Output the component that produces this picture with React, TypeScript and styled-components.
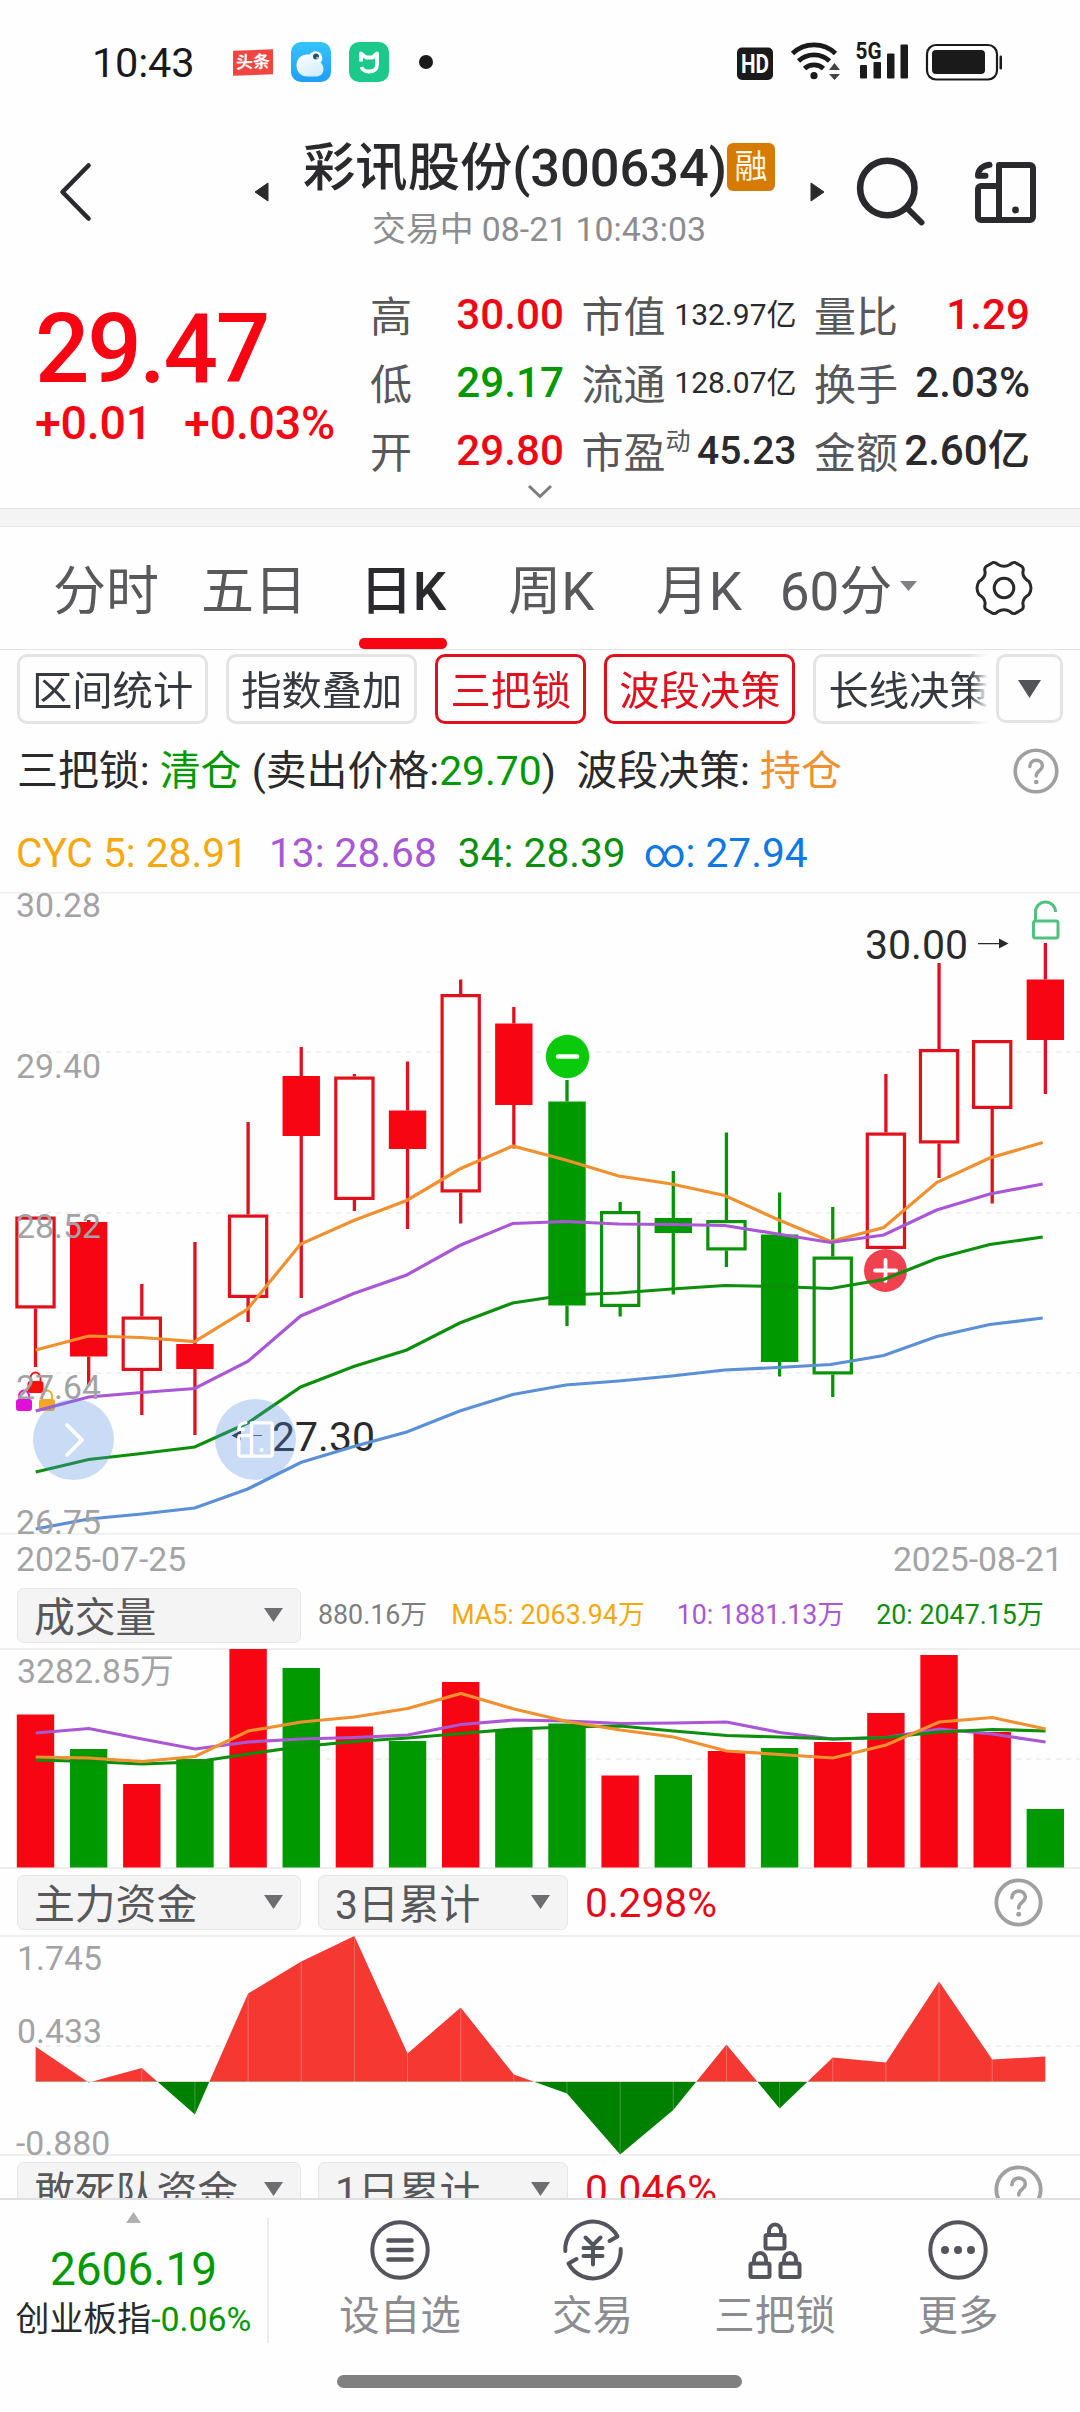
import React from "react";
import styled, { createGlobalStyle, css } from "styled-components";

const RED = "#f70512";
const WICK_RED = "#e0101c";
const GREEN = "#009900";
const INK = "#2a2a2c";
const SANS = `Roboto, "Noto Sans CJK SC", sans-serif`;

const GlobalStyle = createGlobalStyle`
  * { box-sizing: border-box; }
  body { margin: 0; background: #fff; }
  svg { display: block; flex: none; overflow: visible; }
  button { font: inherit; background: none; border: 0; padding: 0; color: inherit; }
`;

const Screen = styled.main`
  width: 1080px;
  height: 2412px;
  overflow: hidden;
  display: flex;
  flex-direction: column;
  background: #fefefe;
  color: ${INK};
  font-family: ${SANS};
  white-space: nowrap;
`;

/* ---------- status bar ---------- */

const StatusBar = styled.header`
  height: 124px;
  flex: none;
  display: flex;
  align-items: center;
  padding: 0 77px 0 92px;
`;
const Clock = styled.time`
  width: 141px;
  font-size: 41.5px;
  line-height: 48px;
  letter-spacing: -0.2px;
  padding-top: 2px;
  color: #1a1a1a;
`;
const AppBadges = styled.div`
  display: flex;
  align-items: center;
  gap: 18px;
`;
const Toutiao = styled.span`
  width: 40px;
  height: 25px;
  background: #f04540;
  color: #fff;
  font-size: 17px;
  font-weight: 700;
  line-height: 25px;
  text-align: center;
  transform: skewY(-2deg);
`;
const Dot = styled.span`
  width: 14px;
  height: 14px;
  border-radius: 50%;
  background: #1a1a1a;
  margin-left: 12px;
`;
const Signals = styled.div`
  margin-left: auto;
`;

/* ---------- title bar ---------- */

const TitleBar = styled.div`
  height: 136px;
  flex: none;
  display: flex;
  align-items: center;
  padding: 0 44px 0 58px;
`;
const TitleGroup = styled.div`
  display: flex;
  align-items: center;
  width: 571px;
  margin: 0 30px 0 160px;
  justify-content: space-between;
`;
const TitleBlock = styled.div`
  width: 474px;
  display: flex;
  flex-direction: column;
  align-items: center;
  gap: 12px;
  margin-right: 1px;
  padding-top: 4px;
`;
const StockName = styled.h1`
  margin: 0;
  display: flex;
  align-items: center;
  font-size: 52.3px;
  line-height: 60px;
  font-weight: 500;
`;
const MarginTag = styled.span`
  width: 48px;
  height: 48px;
  border-radius: 6px;
  background: #d67a00;
  color: #fff8e8;
  font-size: 33px;
  font-weight: 400;
  line-height: 48px;
  text-align: center;
  margin-bottom: 2px;
`;
const SubTitle = styled.p`
  margin: 0;
  font-size: 33.8px;
  line-height: 40px;
  color: #8d8d8f;
`;
const IconButton = styled.button<{ $ml?: number }>`
  display: flex;
  margin-left: ${(p) => p.$ml ?? 0}px;
`;

/* ---------- quote ---------- */

const Quote = styled.section`
  height: 248px;
  flex: none;
  display: flex;
  flex-direction: column;
  align-items: center;
`;
const QuoteBody = styled.div`
  width: 100%;
  height: 224px;
  display: flex;
`;
const PriceBlock = styled.div`
  width: 370px;
  padding: 38px 0 0 35px;
  color: ${RED};
  font-weight: 500;
`;
const Price = styled.div`
  font-size: 96px;
  line-height: 102px;
  letter-spacing: -2.4px;
`;
const Change = styled.div`
  display: flex;
  font-size: 46.5px;
  line-height: 46px;
  letter-spacing: -0.2px;
  gap: 32px;
`;
const StatGrid = styled.dl`
  margin: 0;
  padding-top: 20px;
  display: grid;
  grid-template-columns: 194px 215px 216px;
  grid-auto-rows: 68px;
  column-gap: 17.5px;
`;
const Stat = styled.div`
  display: flex;
  align-items: center;
  justify-content: space-between;
`;
const StatLabel = styled.dt`
  font-size: 42px;
  color: #58585a;
  display: flex;
  line-height: 68px;
  padding-top: 7px;
`;
const StatSup = styled.sup`
  font-size: 25px;
  line-height: 44px;
`;
const StatValue = styled.dd<{ $color?: string; $small?: boolean; $size?: number }>`
  margin: 0;
  font-size: ${(p) => p.$size ?? (p.$small ? 30 : 42.2)}px;
  line-height: 68px;
  padding-top: 1px;
  font-weight: ${(p) => (p.$small ? 400 : 500)};
  color: ${(p) => p.$color ?? INK};
`;
const Divider = styled.div`
  height: 19px;
  flex: none;
  background: #f4f4f4;
  border: solid #e3e3e3;
  border-width: 1px 0;
`;

/* ---------- period tabs ---------- */

const Tabs = styled.nav`
  height: 123px;
  flex: none;
  display: flex;
  padding: 19px 0 0 32px;
  border-bottom: 1px solid #e2e2e2;
`;
const Tab = styled.button<{ $w: number; $active?: boolean }>`
  width: ${(p) => p.$w}px;
  display: flex;
  flex-direction: column;
  align-items: center;
  font-size: 53px;
  line-height: 92px;
  color: #59595b;
  ${(p) =>
    p.$active &&
    css`
      color: ${INK};
      font-weight: 500;
      &::after {
        content: "";
        width: 88px;
        height: 11px;
        border-radius: 5px;
        background: ${RED};
      }
    `}
`;
const TabIcon = styled.span<{ $ml: number; $h?: number }>`
  display: flex;
  align-items: center;
  height: ${(p) => p.$h ?? 79}px;
  margin-left: ${(p) => p.$ml}px;
`;

/* ---------- indicator chips ---------- */

const ChipBar = styled.div`
  height: 78px;
  flex: none;
  display: flex;
  padding: 4px 17px 0;
  justify-content: space-between;
`;
const ChipScroller = styled.div`
  width: 971px;
  height: 70px;
  display: flex;
  gap: 18px;
  overflow: hidden;
  mask-image: linear-gradient(90deg, #000 953px, transparent 971px);
`;
const Chip = styled.button<{ $on?: boolean }>`
  flex: none;
  height: 70px;
  padding: 6px 12px 0;
  border: 3px solid ${(p) => (p.$on ? "#e0101c" : "#e4e4e5")};
  border-radius: 10px;
  font-size: 40.3px;
  line-height: 58px;
  color: ${(p) => (p.$on ? "#e0101c" : "#363a40")};
`;
const ChipMore = styled.button`
  width: 67px;
  height: 69px;
  border: 3px solid #e4e4e5;
  border-radius: 10px;
  display: flex;
  align-items: center;
  justify-content: center;
`;

/* ---------- signal lines ---------- */

const SignalLine = styled.div`
  height: 86px;
  flex: none;
  display: flex;
  align-items: center;
  justify-content: space-between;
  padding: 0 21px 0 17px;
  font-size: 40.9px;
  line-height: 86px;
  white-space: pre;
`;
const Tint = styled.span<{ $c: string }>`
  color: ${(p) => p.$c};
`;
const CycLine = styled.div`
  height: 78px;
  flex: none;
  display: flex;
  align-items: center;
  gap: 21px;
  padding-left: 16px;
  font-size: 40.7px;
`;
const CycInfinity = styled.span`
  color: #0d78e6;
  margin-left: -3px;
`;

/* ---------- charts ---------- */

const ChartArea = styled.section`
  position: relative;
  flex: none;
`;
const FloatButton = styled.button<{ $left: number }>`
  position: absolute;
  left: ${(p) => p.$left}px;
  top: 507px;
  width: 81px;
  height: 81px;
  border-radius: 50%;
  background: rgba(82, 138, 225, 0.3);
  display: flex;
  align-items: center;
  justify-content: center;
`;
const DateRow = styled.div`
  height: 47px;
  flex: none;
  display: flex;
  align-items: center;
  justify-content: space-between;
  padding: 1px 17px 0 16px;
  font-size: 33.7px;
  color: #a3a3a5;
`;
const PanelBar = styled.div`
  height: 66px;
  flex: none;
  display: flex;
  align-items: center;
  padding-left: 17px;
`;
const Select = styled.button<{ $w: number }>`
  width: ${(p) => p.$w}px;
  height: 55px;
  border: 1px solid #e6e6e6;
  border-radius: 7px;
  background: #f4f4f4;
  display: flex;
  align-items: center;
  justify-content: space-between;
  padding: 0 17px 0 16px;
  margin-right: 17px;
  font-size: 40.8px;
  color: #58585a;
`;
const SelectText = styled.span`
  line-height: 47px;
  padding-top: 6px;
`;
const VolumeLegend = styled.div`
  display: flex;
  gap: 32px;
  font-size: 26.8px;
  line-height: 66px;
`;
const VolumeNow = styled.span`
  color: #7e7e80;
  margin-right: -8px;
`;
const Ratio = styled.span`
  font-size: 40.7px;
  line-height: 66px;
  padding-top: 1px;
  color: #e60a18;
`;
const HelpSlot = styled.span`
  margin: 0 37px 0 auto;
`;
const ClippedPanel = styled.div`
  height: 42px;
  flex: none;
  overflow: hidden;
`;

/* ---------- bottom bar ---------- */

const BottomBar = styled.footer`
  height: 147px;
  flex: none;
  border-top: 2px solid #e0e0e0;
  display: flex;
`;
const IndexTicker = styled.div`
  width: 269px;
  margin-top: 18px;
  height: 125px;
  border-right: 2px solid #ececec;
  display: flex;
  flex-direction: column;
  align-items: center;
`;
const TickerCaret = styled.div`
  height: 21px;
  margin-top: -6px;
`;
const IndexPrice = styled.div`
  font-size: 46px;
  line-height: 60px;
  margin-top: 6px;
  color: ${GREEN};
`;
const IndexName = styled.div`
  font-size: 33.9px;
  line-height: 40px;
  margin-top: 1px;
`;
const Action = styled.button<{ $w: number }>`
  width: ${(p) => p.$w}px;
  display: flex;
  flex-direction: column;
  align-items: center;
  padding-top: 20px;
  font-size: 40.5px;
  line-height: 50px;
  color: #8c8c90;
  gap: 11px;
`;
const HomeArea = styled.div`
  flex: 1;
  display: flex;
  justify-content: center;
  padding: 30px 1px 0 0;
`;
const HomePill = styled.div`
  width: 405px;
  height: 13px;
  border-radius: 7px;
  background: #808080;
`;

/* ---------- icons ---------- */

const WeatherIcon = () => (
  <svg width="40" height="40" viewBox="0 0 40 40">
    <defs>
      <linearGradient id="sky" x1="0" y1="0" x2="0" y2="1">
        <stop offset="0" stopColor="#35c4fb" />
        <stop offset="1" stopColor="#1f9df5" />
      </linearGradient>
      <linearGradient id="cloud" x1="0" y1="0" x2="0.6" y2="1">
        <stop offset="0" stopColor="#fff" />
        <stop offset="1" stopColor="#d4edfd" />
      </linearGradient>
    </defs>
    <rect width="40" height="40" rx="10" fill="url(#sky)" />
    <circle cx="24.500" cy="16" r="6.800" fill="#fff" />
    <path d="M16.500 12.500c4.500 0 7 2.500 8 5.500c5 1 8 4.500 8 9c0 5-3.500 7.500-8 7.500h-8c-6.500 0-11-4.500-11-11s4.500-11 11-11z" fill="url(#cloud)" />
    <circle cx="25" cy="14.500" r="3" fill="#27506e" />
    <circle cx="26.500" cy="16" r="1.300" fill="#9cc" />
  </svg>
);

const MiIcon = () => (
  <svg width="40" height="40" viewBox="0 0 40 40">
    <rect width="40" height="40" rx="10" fill="#1cc98a" />
    <path
      d="M12 19.500V11.500l5 4h6.500l4.500-4v11.500c0 4-3 6.500-8 6.500-4 0-6.500-1.500-7.500-4.500"
      fill="none"
      stroke="#fff"
      strokeWidth="3.800"
      strokeLinejoin="round"
    />
  </svg>
);

const SignalIcons = () => (
  <svg width="268" height="48" viewBox="735 38 268 48" fill="#1a1a1a">
    <rect x="737" y="47.500" width="36" height="32.500" rx="5" />
    <text x="755" y="72.500" fontFamily={SANS} fontWeight="700" fontSize="25" textAnchor="middle" textLength="28" lengthAdjust="spacingAndGlyphs" fill="#fff">HD</text>
    <g fill="none" stroke="#1a1a1a" strokeWidth="4.800">
      <path d="M792.500 53.500a31 31 0 0 1 43 0" />
      <path d="M798.500 61a22.500 22.500 0 0 1 31 0" />
      <path d="M804.500 68.500a14 14 0 0 1 19 0" />
    </g>
    <circle cx="814" cy="75.700" r="3.600" />
    <path d="M829 70l5.500-7 5.500 7zM829 74l5.500 6 5.500-6z" fill="#444" />
    <text x="855.500" y="59" fontFamily={SANS} fontWeight="700" fontSize="23" textLength="26" lengthAdjust="spacingAndGlyphs">5G</text>
    <rect x="860" y="65" width="7" height="13.500" rx="1" />
    <rect x="873.500" y="62" width="7.500" height="16.500" rx="1" />
    <rect x="887" y="53.500" width="7.500" height="25" rx="1" />
    <rect x="900.500" y="44.500" width="7.500" height="34" rx="1" />
    <rect x="927" y="45" width="70" height="34.500" rx="9" fill="none" stroke="#1a1a1a" strokeWidth="2.200" />
    <rect x="932" y="50" width="53" height="24" rx="4" />
    <rect x="999.500" y="55.500" width="2.500" height="14" rx="1.200" />
  </svg>
);

const DeviceIcon = ({ size, color, sw }: { size: number; color: string; sw: number }) => (
  <svg width={size} height={size} viewBox="0 0 61 61" fill="none" stroke={color} strokeWidth={sw} strokeLinejoin="round" strokeLinecap="round">
    <path d="M24 3h31a3 3 0 0 1 3 3v49a3 3 0 0 1-3 3H24zM24 24H6a3 3 0 0 0-3 3v28a3 3 0 0 0 3 3h18" />
    <path d="M14.500 2.800C7 3.800 3 8 3 13.800h7.500" />
    <circle cx="40.500" cy="48" r="3.400" fill={color} stroke="none" />
  </svg>
);

const HelpIcon = ({ r }: { r: number }) => (
  <svg width={r * 2} height={r * 2} viewBox="0 0 46 46">
    <circle cx="23" cy="23" r="20.800" fill="none" stroke="#a0a0a2" strokeWidth="3.600" />
    <path d="M16.800 18.500c.3-3.800 2.800-6.200 6.300-6.200 3.700 0 6.300 2.300 6.300 5.600 0 4.600-6.200 5-6.200 10.200" fill="none" stroke="#a0a0a2" strokeWidth="3.400" strokeLinecap="round" />
    <circle cx="23.200" cy="34" r="2.300" fill="#a0a0a2" />
  </svg>
);

const GearIcon = () => (
  <svg width="56" height="54" viewBox="-28 -27 56 54" fill="none" stroke="#2a2a2c" strokeWidth="3" strokeLinejoin="round">
    <path d="M-11-25.500Q-8-26-6-23.500Q0-20 6-23.500Q8-26 11-25.500L18-21.500Q20-19.500 19-16.500Q18-11 25-6.500Q27-3 27 0Q27 3 25 6.500Q18 11 19 16.500Q20 19.500 18 21.500L11 25.500Q8 26 6 23.500Q0 20-6 23.500Q-8 26-11 25.500L-18 21.500Q-20 19.500-19 16.500Q-18 11-25 6.500Q-27 3-27 0Q-27-3-25-6.500Q-18-11-19-16.500Q-20-19.500-18-21.500Z" />
    <circle r="9.800" />
  </svg>
);

const Caret = ({ w = 19, h = 14, color = "#6e6e70", up = false }) => (
  <svg width={w} height={h} viewBox="0 0 20 15" preserveAspectRatio="none">
    <path d={up ? "M0 15h20L10 0z" : "M0 0h20L10 15z"} fill={color} />
  </svg>
);

const padlock = (x: number, y: number) => (
  <g key={`${x}-${y}`}>
    <rect x={x - 9.5} y={y} width="19" height="13.500" rx="1.500" />
    <path d={`M${x - 6} ${y}v-4a6 6.500 0 0 1 12 0v4`} />
  </g>
);

/* ---------- chart data ---------- */

type Candle = [top: number, bottom: number, high: number, low: number, tone: "r" | "g", solid: boolean];

const CANDLES: Candle[] = [
  [1216.5, 1308.5, 1216.5, 1367, "r", false],
  [1222, 1356.5, 1220, 1386, "r", true],
  [1316.5, 1371, 1284, 1415, "r", false],
  [1344, 1369, 1242, 1435, "r", true],
  [1214.5, 1298, 1122, 1322, "r", false],
  [1076, 1136, 1047, 1298, "r", true],
  [1076.5, 1200, 1074, 1211, "r", false],
  [1110.5, 1149, 1061.5, 1229, "r", true],
  [994, 1192.5, 979.5, 1223.5, "r", false],
  [1023.5, 1105, 1007, 1148.5, "r", true],
  [1101.5, 1305.5, 1080, 1326, "g", true],
  [1211, 1307, 1202, 1316.5, "g", false],
  [1218, 1233, 1171, 1294.5, "g", true],
  [1220, 1250.5, 1132.5, 1267, "g", false],
  [1234.5, 1362, 1192.5, 1376.5, "g", true],
  [1256.5, 1374.5, 1207, 1397, "g", false],
  [1132.5, 1249, 1074, 1249, "r", false],
  [1049, 1143.5, 963, 1178, "r", false],
  [1040, 1109, 1040, 1203.5, "r", false],
  [979.5, 1040, 943, 1094, "r", true],
];

const CYC = [
  { color: "#5b8fd6", ys: [1529, 1519, 1514, 1508, 1489, 1462.5, 1446.5, 1432, 1411, 1394.5, 1385, 1381, 1376, 1370, 1367.5, 1364.5, 1355.5, 1336.5, 1324.5, 1318] },
  { color: "#0d8f0d", ys: [1472, 1459.5, 1453.5, 1447, 1423, 1387, 1366.5, 1350, 1323, 1303, 1295, 1293, 1289, 1285.5, 1286.5, 1288.5, 1279.5, 1258.5, 1244.5, 1237] },
  { color: "#f0902f", ys: [1350, 1336, 1337.5, 1341.5, 1309, 1244, 1220.5, 1200.5, 1169, 1146, 1160, 1176, 1184, 1195.5, 1219.5, 1241.5, 1227.5, 1182.5, 1158, 1142.5] },
  { color: "#a957d4", ys: [1411, 1397, 1392.5, 1388.5, 1361.5, 1316, 1293.5, 1275, 1245.5, 1223.5, 1221.5, 1224, 1224.5, 1225.5, 1234, 1242.5, 1235, 1210, 1194, 1184] },
];

const VOLUME_TOPS = [1714.5, 1749, 1784, 1759, 1649, 1668, 1726.5, 1741, 1682, 1729, 1723.5, 1775.5, 1775, 1751, 1748, 1742, 1713, 1655, 1732, 1809];
const VOLUME_TONES = "rgrgrgrgrggrgrgrrrrg";
const VOLUME_MA = [
  { color: "#a957d4", ys: [1733, 1728.5, 1739, 1749, 1742, 1739, 1737.5, 1735, 1724.5, 1720, 1721, 1723.5, 1723, 1722, 1732.5, 1739, 1737.5, 1729, 1734, 1742] },
  { color: "#0d8f0d", ys: [1760, 1761.5, 1764, 1762, 1754, 1746.5, 1741.5, 1738, 1733.5, 1729, 1727, 1726, 1731, 1735.5, 1737, 1739, 1737.5, 1732, 1729.5, 1731] },
  { color: "#f0902f", ys: [1757, 1758, 1761.5, 1756.5, 1731, 1722, 1717, 1708.5, 1693.5, 1709, 1721.5, 1730, 1737, 1751, 1754.5, 1758, 1745, 1722, 1717.5, 1729] },
];

const FUND_ZERO = 2081.7;
const FUND_YS = [2046.5, 2082.5, 2068, 2114.5, 1993.5, 1961.5, 1936, 2053.5, 2007.5, 2074.5, 2093.5, 2154.5, 2110, 2044.5, 2108.5, 2057.5, 2062.5, 1981.5, 2059.5, 2056.5];

const cx = (i: number) => 35.5 + 53.15 * i;
const poly = (ys: number[], step = 53.15) => ys.map((y, i) => `${35.7 + step * i},${y}`).join(" ");
const hue = (t: string) => (t === "r" ? RED : GREEN);

const AxisText = ({ y, children, x = 16 }: { y: number; x?: number; children: string }) => (
  <text x={x} y={y} fontSize="33.8" fill="#a3a3a5">{children}</text>
);

const TinyLock = ({ x, y, color }: { x: number; y: number; color: string }) => (
  <g>
    <rect x={x - 8} y={y} width="16" height="12" rx="3" fill={color} />
    <path d={`M${x - 5} ${y + 1}v-4a5 5.500 0 0 1 10 0v4`} fill="none" stroke={color} strokeWidth="1.800" />
  </g>
);

const CandleChart = () => (
  <svg width="1080" height="643" viewBox="0 892 1080 643" fontFamily={SANS}>
    <path d="M0 892.700H1080M0 1533.800H1080" stroke="#eeeeee" strokeWidth="1.500" />
    <path d="M36 1052H1080M36 1213H1080M36 1373H1080" stroke="#ededed" strokeWidth="1.500" strokeDasharray="5 5" />
    {CANDLES.map(([top, bottom, high, low, tone, solid], i) => {
      const c = tone === "r" ? WICK_RED : "#0a930a";
      return (
        <g key={i}>
          <path d={`M${cx(i)} ${high}V${top}M${cx(i)} ${bottom}V${low}`} stroke={c} strokeWidth="3.300" />
          {solid ? (
            <rect x={cx(i) - 18.7} y={top} width="37.400" height={bottom - top} fill={hue(tone)} />
          ) : (
            <rect x={cx(i) - 18.6} y={top + 1.6} width="37.200" height={bottom - top - 3.2} fill="#fefefe" stroke={c} strokeWidth="3.200" />
          )}
        </g>
      );
    })}
    <TinyLock x={35.5} y={1381} color="#f8120f" />
    <TinyLock x={24} y={1399} color="#e010d8" />
    <TinyLock x={47} y={1399} color="#f5a623" />
    <circle cx="885.500" cy="1270.500" r="21.500" fill="#f04150" />
    <path d="M875 1270.500h21M885.500 1260v21" stroke="#fff" strokeWidth="3.800" strokeLinecap="round" />
    <text x="272" y="1450.500" fontSize="41" fill={INK}>27.30</text>
    <path d="M262 1435.200h-21v-4.700l-9.500 5 9.500 5v-4.600h21z" fill={INK} />
    {CYC.map((l) => (
      <polyline key={l.color} points={poly(l.ys, 53)} fill="none" stroke={l.color} strokeWidth="3.200" />
    ))}
    <circle cx="567.500" cy="1056.500" r="21.700" fill="#0bc90b" />
    <path d="M558 1056.500h19" stroke="#fff" strokeWidth="4.600" strokeLinecap="round" />
    <AxisText y={917}>30.28</AxisText>
    <AxisText y={1078}>29.40</AxisText>
    <AxisText y={1238}>28.52</AxisText>
    <AxisText y={1398.5}>27.64</AxisText>
    <AxisText y={1533.5}>26.75</AxisText>
    <text x="865" y="959" fontSize="41" fill={INK}>30.00</text>
    <path d="M978 943h21v-4.500l9.500 5-9.500 5v-4.300h-21z" fill={INK} />
    <g fill="none" stroke="#52c180" strokeWidth="3">
      <rect x="1033.500" y="921" width="24.500" height="17" rx="2" />
      <path d="M1035.500 921v-9a10 10 0 0 1 20 0" />
    </g>
  </svg>
);

const VolumeChart = () => (
  <svg width="1080" height="221" viewBox="0 1648 1080 221" fontFamily={SANS}>
    <path d="M0 1649H1080M0 1868H1080" stroke="#eeeeee" strokeWidth="2" />
    <path d="M36 1759H1080" stroke="#ebebeb" strokeWidth="1.500" strokeDasharray="5 5" />
    {VOLUME_TOPS.map((t, i) => (
      <rect key={i} x={cx(i) - 18.7} y={t} width="37.400" height={1867.5 - t} fill={hue(VOLUME_TONES[i])} />
    ))}
    {VOLUME_MA.map((l) => (
      <polyline key={l.color} points={poly(l.ys)} fill="none" stroke={l.color} strokeWidth="3.200" />
    ))}
    <AxisText x={17} y={1682.5}>3282.85万</AxisText>
  </svg>
);

const FundChart = () => {
  const area = `M${cx(0)} ${FUND_ZERO}L${FUND_YS.map((y, i) => `${cx(i)} ${y}`).join("L")}L${cx(19)} ${FUND_ZERO}Z`;
  return (
    <svg width="1080" height="221" viewBox="0 1935 1080 221" fontFamily={SANS}>
      <defs>
        <clipPath id="inflow"><rect x="0" y="1935" width="1080" height={FUND_ZERO - 1935} /></clipPath>
        <clipPath id="outflow"><rect x="0" y={FUND_ZERO} width="1080" height="90" /></clipPath>
      </defs>
      <path d="M0 1936H1080M0 2155H1080" stroke="#eeeeee" strokeWidth="2" />
      <path d="M36 2046H1080" stroke="#ebebeb" strokeWidth="1.500" strokeDasharray="5 5" />
      <path d={area} fill="#f53832" clipPath="url(#inflow)" />
      <path d={area} fill="#008000" clipPath="url(#outflow)" />
      {FUND_YS.map((y, i) => (
        <path key={i} d={`M${cx(i)} ${y}V${FUND_ZERO}`} stroke="#fff" strokeWidth="0.700" opacity="0.350" />
      ))}
      <AxisText x={17} y={1970}>1.745</AxisText>
      <AxisText x={17} y={2042.5}>0.433</AxisText>
      <AxisText y={2155}>-0.880</AxisText>
    </svg>
  );
};

/* ---------- panels ---------- */

const Picker = ({ w, children }: { w: number; children: string }) => (
  <Select $w={w}>
    <SelectText>{children}</SelectText>
    <Caret />
  </Select>
);

const FundBar = ({ name, span, ratio }: { name: string; span: string; ratio: string }) => (
  <PanelBar>
    <Picker w={284}>{name}</Picker>
    <Picker w={250}>{span}</Picker>
    <Ratio>{ratio}</Ratio>
    <HelpSlot><HelpIcon r={24.5} /></HelpSlot>
  </PanelBar>
);

const STATS: { label: string; sup?: string; value: string; color?: string; small?: boolean; size?: number }[] = [
  { label: "高", value: "30.00", color: "#ee0815" },
  { label: "市值", value: "132.97亿", small: true },
  { label: "量比", value: "1.29", color: "#ee0815" },
  { label: "低", value: "29.17", color: GREEN },
  { label: "流通", value: "128.07亿", small: true },
  { label: "换手", value: "2.03%" },
  { label: "开", value: "29.80", color: "#ee0815" },
  { label: "市盈", sup: "动", value: "45.23", size: 39 },
  { label: "金额", value: "2.60亿" },
];

const CHIPS = [
  { text: "区间统计" },
  { text: "指数叠加" },
  { text: "三把锁", on: true },
  { text: "波段决策", on: true },
  { text: "长线决策" },
];

export default function App() {
  return (
    <Screen>
      <GlobalStyle />
      <StatusBar>
        <Clock>10:43</Clock>
        <AppBadges>
          <Toutiao>头条</Toutiao>
          <WeatherIcon />
          <MiIcon />
          <Dot />
        </AppBadges>
        <Signals><SignalIcons /></Signals>
      </StatusBar>

      <TitleBar>
        <IconButton>
          <svg width="36" height="64" viewBox="58 160 36 64"><path d="M88.500 165.500L62.500 192L88.500 218.500" fill="none" stroke={INK} strokeWidth="4.600" strokeLinecap="round" strokeLinejoin="round" /></svg>
        </IconButton>
        <TitleGroup>
          <svg width="15" height="20" viewBox="0 0 15 20"><path d="M14 1v18L1 10z" fill={INK} stroke={INK} strokeLinejoin="round" /></svg>
          <TitleBlock>
            <StockName>彩讯股份(300634)<MarginTag>融</MarginTag></StockName>
            <SubTitle>交易中 08-21 10:43:03</SubTitle>
          </TitleBlock>
          <svg width="15" height="20" viewBox="0 0 15 20"><path d="M1 1v18L14 10z" fill={INK} stroke={INK} strokeLinejoin="round" /></svg>
        </TitleGroup>
        <IconButton>
          <svg width="72" height="72" viewBox="855 156 72 72" fill="none" stroke={INK} strokeLinecap="round">
            <circle cx="887.300" cy="188" r="27.200" strokeWidth="6.600" />
            <path d="M908 209l13.500 13.500" strokeWidth="6" />
          </svg>
        </IconButton>
        <IconButton $ml={48}><DeviceIcon size={61} color={INK} sw={6} /></IconButton>
      </TitleBar>

      <Quote>
        <QuoteBody>
          <PriceBlock>
            <Price>29.47</Price>
            <Change><span>+0.01</span><span>+0.03%</span></Change>
          </PriceBlock>
          <StatGrid>
            {STATS.map((s) => (
              <Stat key={s.label}>
                <StatLabel>{s.label}{s.sup && <StatSup>{s.sup}</StatSup>}</StatLabel>
                <StatValue $color={s.color} $small={s.small} $size={s.size}>{s.value}</StatValue>
              </Stat>
            ))}
          </StatGrid>
        </QuoteBody>
        <svg width="26" height="15" viewBox="0 0 26 15"><path d="M2 2l11 10.500L24 2" fill="none" stroke="#7c7c7e" strokeWidth="3" /></svg>
      </Quote>
      <Divider />

      <Tabs>
        <Tab $w={148}>分时</Tab>
        <Tab $w={148}>五日</Tab>
        <Tab $w={150} $active>日K</Tab>
        <Tab $w={147}>周K</Tab>
        <Tab $w={148}>月K</Tab>
        <Tab $w={126}>60分</Tab>
        <TabIcon $ml={1}><Caret w={17} h={10} color="#808082" /></TabIcon>
        <TabIcon $ml={59} $h={83}><GearIcon /></TabIcon>
      </Tabs>

      <ChipBar>
        <ChipScroller>
          {CHIPS.map((c) => (
            <Chip key={c.text} $on={c.on}>{c.text}</Chip>
          ))}
        </ChipScroller>
        <ChipMore><Caret w={23} h={18} color="#53535a" /></ChipMore>
      </ChipBar>

      <SignalLine>
        <span>
          三把锁: <Tint $c={GREEN}>清仓</Tint> (卖出价格:<Tint $c={GREEN}>29.70</Tint>)  波段决策: <Tint $c="#f0902f">持仓</Tint>
        </span>
        <HelpIcon r={23} />
      </SignalLine>
      <CycLine>
        <Tint $c="#f5a80f">CYC 5: 28.91</Tint>
        <Tint $c="#a957d4">13: 28.68</Tint>
        <Tint $c="#0d8f0d">34: 28.39</Tint>
        <CycInfinity>∞: 27.94</CycInfinity>
      </CycLine>

      <ChartArea>
        <CandleChart />
        <FloatButton $left={33}>
          <svg width="22" height="36" viewBox="0 0 22 36"><path d="M4 3l15 15L4 33" fill="none" stroke="#fff" strokeWidth="3.800" strokeLinecap="round" strokeLinejoin="round" /></svg>
        </FloatButton>
        <FloatButton $left={214.5}><DeviceIcon size={37} color="#fff" sw={5.5} /></FloatButton>
      </ChartArea>
      <DateRow><span>2025-07-25</span><span>2025-08-21</span></DateRow>

      <PanelBar>
        <Picker w={284}>成交量</Picker>
        <VolumeLegend>
          <VolumeNow>880.16万</VolumeNow>
          <Tint $c="#f5a80f">MA5: 2063.94万</Tint>
          <Tint $c="#a957d4">10: 1881.13万</Tint>
          <Tint $c="#0d8f0d">20: 2047.15万</Tint>
        </VolumeLegend>
      </PanelBar>
      <VolumeChart />
      <FundBar name="主力资金" span="3日累计" ratio="0.298%" />
      <FundChart />
      <ClippedPanel><FundBar name="敢死队资金" span="1日累计" ratio="0.046%" /></ClippedPanel>

      <BottomBar>
        <IndexTicker>
          <TickerCaret><Caret w={15} h={11} color="#b0b0b2" up /></TickerCaret>
          <IndexPrice>2606.19</IndexPrice>
          <IndexName>创业板指<Tint $c={GREEN}>-0.06%</Tint></IndexName>
        </IndexTicker>
        <Action $w={262}>
          <svg width="60" height="60" viewBox="-30 -30 60 60" fill="none" stroke="#54545c" strokeWidth="4">
            <circle r="27.700" />
            <path d="M-11.500-9.500h23M-11.500 0h23M-11.500 9.500h23" strokeWidth="4.600" strokeLinecap="round" />
          </svg>
          设自选
        </Action>
        <Action $w={123}>
          <svg width="60" height="60" viewBox="-30 -30 60 60" fill="none" stroke="#54545c" strokeWidth="4" strokeLinecap="round" strokeLinejoin="round">
            <path d="M-27.700 1A27.700 27.700 0 0 1 24.500-13.500L16.500-9M27.700-1A27.700 27.700 0 0 1-24.500 13.500L-16.500 9" />
            <path d="M-7.500-12.500L0-5L7.500-12.500M0-5V14.500M-9.500-2h19M-9.500 6h19" />
          </svg>
          交易
        </Action>
        <Action $w={242}>
          <svg width="60" height="60" viewBox="-30 -30 60 60" fill="none" stroke="#54545c" strokeWidth="4">
            {padlock(0, -15)}
            {padlock(-15, 13.5)}
            {padlock(15, 13.5)}
          </svg>
          三把锁
        </Action>
        <Action $w={124}>
          <svg width="60" height="60" viewBox="-30 -30 60 60" fill="#54545c">
            <circle r="27.700" fill="none" stroke="#54545c" strokeWidth="4" />
            <circle cx="-13" r="4" />
            <circle r="4" />
            <circle cx="13" r="4" />
          </svg>
          更多
        </Action>
      </BottomBar>
      <HomeArea><HomePill /></HomeArea>
    </Screen>
  );
}
